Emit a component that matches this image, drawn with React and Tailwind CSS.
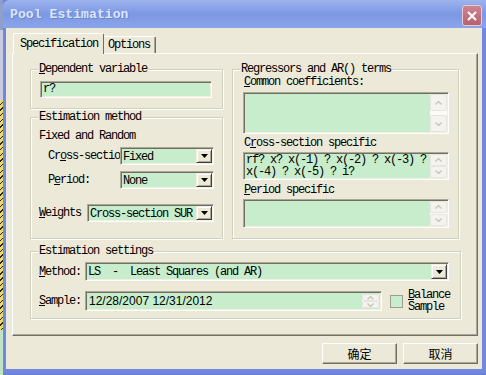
import React from "react";

const sunken =
  "border border-t-[#ACA899] border-l-[#ACA899] border-b-white border-r-white shadow-[inset_1px_1px_0_#716F64,inset_-1px_-1px_0_#F1EFE2] bg-[#C7EDCC]";

function DropBtn() {
  return (
    <div className="w-[16px] h-full bg-[#ECE9D8] border border-t-[#F1EFE2] border-l-[#F1EFE2] border-b-[#404040] border-r-[#404040] shadow-[inset_1px_1px_0_#fff,inset_-1px_-1px_0_#ACA899] flex items-center justify-center">
      <svg width="7" height="4" viewBox="0 0 7 4">
        <polygon points="0,0 7,0 3.5,4" fill="#000" />
      </svg>
    </div>
  );
}

function Combo({ cls, children }) {
  return (
    <div className={`flex p-[1px] ${sunken} ${cls}`}>
      <div className="flex-1 pl-[1px] leading-[16px] whitespace-pre overflow-hidden">{children}</div>
      <DropBtn />
    </div>
  );
}

function Chevron({ up }) {
  return (
    <svg width="7" height="4" viewBox="0 0 7 4">
      <polyline
        points={up ? "0.5,3.5 3.5,0.5 6.5,3.5" : "0.5,0.5 3.5,3.5 6.5,0.5"}
        fill="none"
        stroke="#C6C5BC"
        strokeWidth="1.4"
      />
    </svg>
  );
}

function ScrollBtn({ up, cls }) {
  return (
    <div
      className={`w-[17px] ${cls} rounded-[2px] border border-[#E6E5DE] bg-[#F4F3EE] flex items-center justify-center`}
    >
      <Chevron up={up} />
    </div>
  );
}

function TextArea({ cls, btnCls, children }) {
  return (
    <div className={`flex p-[1px] ${sunken} ${cls}`}>
      <div className="flex-1 pl-[1px] leading-[12px] whitespace-pre overflow-hidden">{children}</div>
      <div className="w-[17px] flex flex-col justify-between bg-[#FBFBF8]">
        <ScrollBtn up cls={btnCls} />
        <ScrollBtn cls={btnCls} />
      </div>
    </div>
  );
}

function Group({ title, cls, children }) {
  return (
    <fieldset
      className={`border border-[#D0D0BF] shadow-[inset_1px_1px_0_#fff,1px_1px_0_#fff] p-0 m-0 min-w-0 ${cls}`}
    >
      <legend className="ml-[7px] px-[1px] leading-[14px] bg-[#ECE9D8] whitespace-nowrap">{title}</legend>
      {children}
    </fieldset>
  );
}

function Btn({ children }) {
  return (
    <div className="w-[75px] h-[21px] bg-[#ECE9D8] border border-t-white border-l-white border-b-[#716F64] border-r-[#716F64] shadow-[inset_-1px_-1px_0_#ACA899] flex items-center justify-center font-['Noto_Sans_CJK_SC',sans-serif] text-[12px] tracking-normal leading-none">
      {children}
    </div>
  );
}

export default function App() {
  return (
    <div className="w-[486px] h-[375px] overflow-hidden bg-[#6C82D6] flex font-['Liberation_Mono',monospace] text-[12px] tracking-[-1.2px] text-black">
      <div className="w-[3px] h-[375px] flex flex-col">
        <div className="h-[30px] bg-[#8E9FCB]" />
        <div className="h-[70px] bg-[#C9CCE0]" />
        <div className="h-[230px] bg-[repeating-linear-gradient(135deg,#E9D96A_0px,#E9D96A_3px,#222_3px,#222_4px)]" />
        <div className="flex-1 bg-[#BFE3C4]" />
      </div>
      <div className="w-[483px] h-[373px] flex flex-col">
        <div className="h-[28px] shrink-0 rounded-tl-[6px] bg-linear-to-b from-[#9DB3EE] via-[#7C98E4] to-[#8BA5EA] flex items-start justify-between pl-[7px] pr-[4px]">
          <div className="mt-[7px] font-bold text-[13px] tracking-[0.1px] leading-[16px] text-[#DCE6FA] [text-shadow:1px_1px_0_#6E86D0]">
            Pool Estimation
          </div>
          <div className="mt-[5px] w-[20px] h-[21px] rounded-[3px] border border-[#E9C9D1] bg-linear-to-b from-[#CF8593] to-[#B6616F] flex items-center justify-center">
            <svg width="10" height="10" viewBox="0 0 10 10">
              <path d="M1 1 L9 9 M9 1 L1 9" stroke="#fff" strokeWidth="2" />
            </svg>
          </div>
        </div>
        <div className="flex-1 bg-[#ECE9D8] border-l-[3px] border-r-[4px] border-b-[4px] border-[#7287DE] flex flex-col pl-[6px] pr-[4px] pt-[5px]">
          {/* tabs */}
          <div className="h-[20px] flex items-end pl-[1px]">
            <div className="relative z-10 -mb-[1px] w-[91px] h-[21px] bg-[#ECE9D8] border-l border-t border-white border-r border-r-[#716F64] rounded-t-[2px] pl-[6px] leading-[20px] whitespace-nowrap">
              Specification
            </div>
            <div className="w-[52px] h-[17px] bg-[#ECE9D8] border-t border-t-white border-r border-r-[#716F64] shadow-[inset_-1px_0_0_#ACA899] rounded-tr-[2px] pl-[4px] leading-[17px] whitespace-nowrap">
              Options
            </div>
          </div>
          {/* panel */}
          <div className="w-[466px] h-[283px] border-l border-t border-white border-r border-b border-r-[#716F64] border-b-[#716F64] shadow-[inset_-1px_-1px_0_#ACA899] pl-[17px] pt-[8px] flex flex-col">
            <div className="flex gap-[9px]">
              <div className="w-[193px] flex flex-col gap-[1px]">
                <Group
                  cls="h-[47px]"
                  title={
                    <>
                      <u>D</u>ependent variable
                    </>
                  }
                >
                  <div className="pt-[5px] pl-[9px] pr-[10px]">
                    <div className={`h-[17px] pl-[2px] leading-[15px] ${sunken}`}>r?</div>
                  </div>
                </Group>
                <Group cls="h-[129px]" title="Estimation method">
                  <div className="pl-[8px] pr-[8px] flex flex-col">
                    <div className="mt-[5px] leading-[14px] whitespace-nowrap">Fixed and Random</div>
                    <div className="mt-[4px] flex items-center">
                      <div className="ml-[9px] w-[72px] whitespace-nowrap overflow-hidden">
                        Cr<u>o</u>ss-sectio
                      </div>
                      <Combo cls="w-[94px] h-[18px]">Fixed</Combo>
                    </div>
                    <div className="mt-[6px] flex items-center">
                      <div className="ml-[9px] w-[72px] whitespace-nowrap">
                        P<u>e</u>riod:
                      </div>
                      <Combo cls="w-[94px] h-[18px]">None</Combo>
                    </div>
                    <div className="mt-[15px] flex items-center">
                      <div className="w-[48px] whitespace-nowrap">
                        <u>W</u>eights
                      </div>
                      <Combo cls="w-[127px] h-[18px]">Cross-section SUR</Combo>
                    </div>
                  </div>
                </Group>
              </div>
              <Group cls="w-[227px] h-[177px]" title="Regressors and AR() terms">
                <div className="pl-[10px] flex flex-col">
                  <div className="pl-[1px] leading-[13px] whitespace-nowrap">
                    <u>C</u>ommon coefficients:
                  </div>
                  <TextArea cls="mt-[3px] w-[206px] h-[42px]" btnCls="h-[17px]" />
                  <div className="mt-[2px] pl-[1px] leading-[14px] whitespace-nowrap">
                    C<u>r</u>oss-section specific
                  </div>
                  <TextArea cls="mt-[2px] w-[206px] h-[28px]" btnCls="h-[12px]">
                    {"rf? x? x(-1) ? x(-2) ? x(-3) ?\nx(-4) ? x(-5) ? i?"}
                  </TextArea>
                  <div className="mt-[3px] pl-[1px] leading-[14px] whitespace-nowrap">
                    <u>P</u>eriod specific
                  </div>
                  <TextArea cls="mt-[2px] w-[206px] h-[29px]" btnCls="h-[12px]" />
                </div>
              </Group>
            </div>
            <Group cls="mt-[5px] w-[431px] h-[75px]" title="Estimation settings">
              <div className="pl-[8px] flex flex-col">
                <div className="mt-[4px] flex items-center">
                  <div className="w-[46px] whitespace-nowrap">
                    <u>M</u>ethod:
                  </div>
                  <Combo cls="w-[364px] h-[19px]">{"LS  -  Least Squares (and AR)"}</Combo>
                </div>
                <div className="mt-[8px] flex items-center">
                  <div className="w-[46px] whitespace-nowrap">
                    <u>S</u>ample:
                  </div>
                  <div className={`w-[297px] h-[20px] flex p-[2px] ${sunken}`}>
                    <div className="flex-1 pl-[1px] font-['Liberation_Sans',sans-serif] text-[12px] tracking-normal leading-[15px]">
                      12/28/2007 12/31/2012
                    </div>
                    <div className="w-[17px] flex flex-col bg-[#FBFBF8]">
                      <ScrollBtn up cls="h-[8px]" />
                      <ScrollBtn cls="h-[8px]" />
                    </div>
                  </div>
                  <div className="ml-[8px] w-[13px] h-[13px] border border-[#9D9D92] bg-[#C7EDCC]" />
                  <div className="ml-[5px] leading-[12px] whitespace-nowrap">
                    <u>B</u>alance
                    <br />
                    Sample
                  </div>
                </div>
              </div>
            </Group>
          </div>
          {/* buttons */}
          <div className="mt-[7px] flex justify-end gap-[6px]">
            <Btn>确定</Btn>
            <Btn>取消</Btn>
          </div>
        </div>
      </div>
    </div>
  );
}
